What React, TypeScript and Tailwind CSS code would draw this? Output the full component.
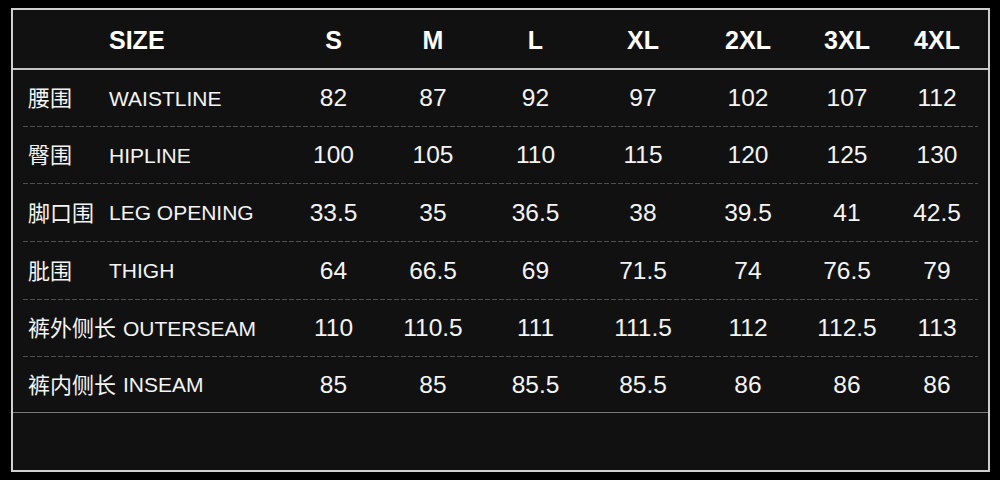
const SIZES = ["S", "M", "L", "XL", "2XL", "3XL", "4XL"];

const ROWS = [
  { cn: "腰围", en: "WAISTLINE", h: "h-[56px]", values: ["82", "87", "92", "97", "102", "107", "112"] },
  { cn: "臀围", en: "HIPLINE", h: "h-[56px]", values: ["100", "105", "110", "115", "120", "125", "130"] },
  { cn: "脚口围", en: "LEG OPENING", h: "h-[57px]", values: ["33.5", "35", "36.5", "38", "39.5", "41", "42.5"] },
  { cn: "肶围", en: "THIGH", h: "h-[57px]", values: ["64", "66.5", "69", "71.5", "74", "76.5", "79"] },
  { cn: "裤外侧长", en: "OUTERSEAM", h: "h-[56px]", values: ["110", "110.5", "111", "111.5", "112", "112.5", "113"] },
  { cn: "裤内侧长", en: "INSEAM", h: "h-[55px]", values: ["85", "85", "85.5", "85.5", "86", "86", "86"] },
];

const GRID = "grid grid-cols-[271px_99px_100px_105px_110px_100px_98px_82px] items-center";

export default function App() {
  return (
    <div className="w-[1000px] h-[480px] bg-black pt-[8px] pl-[11px] font-['Liberation_Sans','Noto_Sans_CJK_SC',sans-serif] text-[#f4f4f4]">
      <div className="w-[979px] h-[464px] border-2 border-[#cfcfcf] bg-[#111111] flex flex-col">
        {/* header */}
        <div className={`${GRID} h-[60px] border-b-2 border-[#c4c4c4] pt-[4px] font-bold text-[25px] text-white`}>
          <div className="pl-[96px]">SIZE</div>
          {SIZES.map((s) => (
            <div key={s} className="text-center">
              {s}
            </div>
          ))}
        </div>

        {ROWS.map((row, i) => (
          <div key={row.en}>
            <div className={`${GRID} ${row.h} pt-[1px]`}>
              <div className="pl-[15px] flex items-center">
                <span className="inline-block box-border min-w-[81px] pr-[7px] text-[22px]">{row.cn}</span>
                <span className="text-[21px]">{row.en}</span>
              </div>
              {row.values.map((v, j) => (
                <div key={j} className="text-center text-[24.5px]">
                  {v}
                </div>
              ))}
            </div>
            {i < ROWS.length - 1 ? (
              <div className="mx-[10px] h-px bg-[repeating-linear-gradient(to_right,#4e4e4e_0_5px,transparent_5px_7px)]" />
            ) : (
              <div className="h-px bg-[#7a7a7a]" />
            )}
          </div>
        ))}
      </div>
    </div>
  );
}
